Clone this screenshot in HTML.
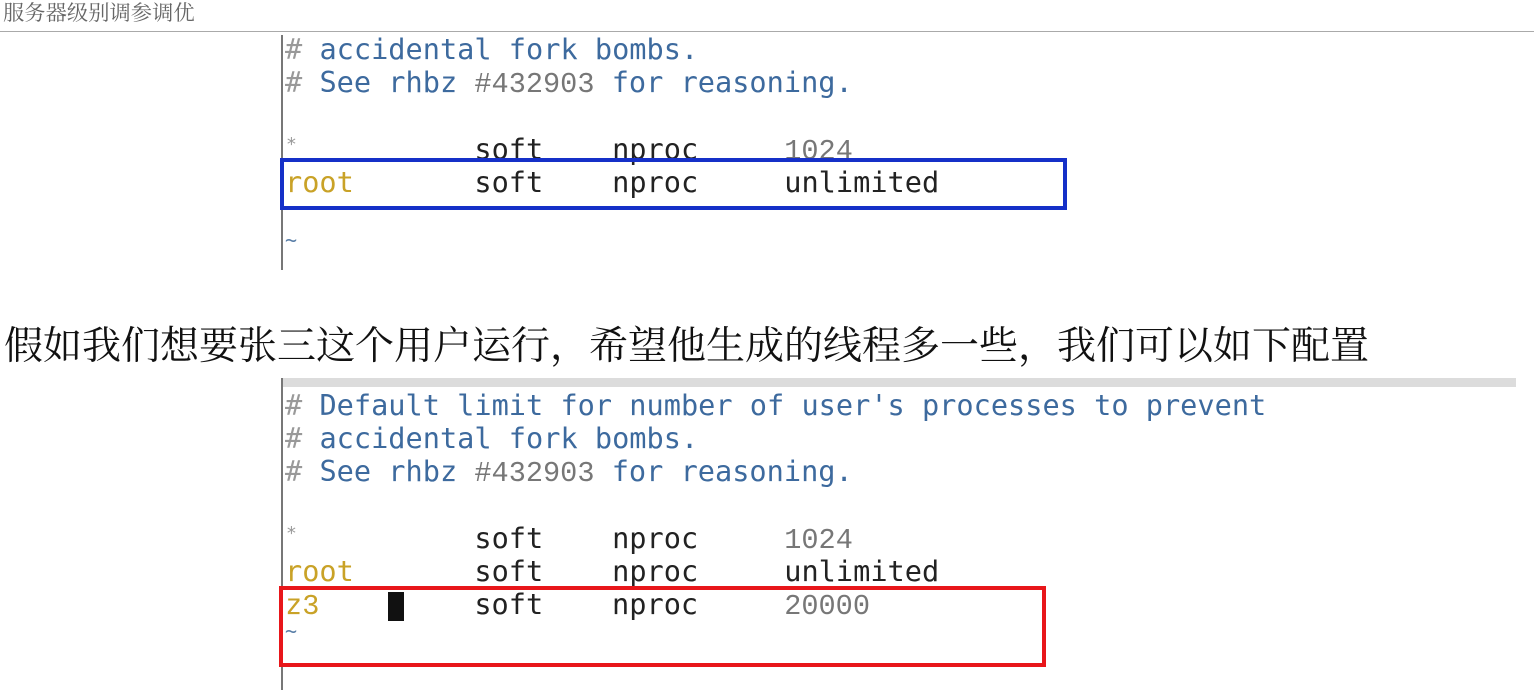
<!DOCTYPE html>
<html><head><meta charset="utf-8">
<style>
body{margin:0;width:1534px;height:690px;background:#fff;position:relative;overflow:hidden}
.hd{position:absolute;left:3px;top:0px;font:21.3px "Noto Serif CJK SC",serif;color:#666;line-height:24px}
.hl{position:absolute;left:0;top:31px;width:1534px;height:1px;background:#aaa}
.vl{position:absolute;width:2px;background:#777}
.ln{position:absolute;left:285px;font-family:"DejaVu Sans Mono",monospace;font-size:28.6px;line-height:33px;white-space:pre;color:#222}
.c{color:#3d6a9e}.h{color:#999}.n{color:#777;font-family:"Liberation Mono",monospace}.r{color:#c9a227}.t{color:#5a7fa8}
.st{position:absolute;left:286px;font:18px "DejaVu Sans Mono",monospace;color:#999}
.cn{position:absolute;left:4px;top:319px;font:39px "Noto Serif CJK SC",serif;line-height:48px;color:#111;white-space:nowrap}
.box{position:absolute;box-sizing:border-box}
</style></head><body>
<div class="hd">服务器级别调参调优</div>
<div class="hl"></div>
<div class="vl" style="left:281px;top:35px;height:235px"></div>
<div class="ln" style="top:33px"><span class="h">#</span> <span class="c">accidental fork bombs.</span></div>
<div class="ln" style="top:66px"><span class="h">#</span> <span class="c">See rhbz </span><span class="n">#432903</span><span class="c"> for reasoning.</span></div>
<div class="st" style="top:134px">*</div>
<div class="ln" style="top:133px">           soft    nproc     <span class="n">1024</span></div>
<div class="ln" style="top:166px"><span class="r">root</span>       soft    nproc     unlimited</div>
<div class="ln" style="top:224px;font-size:20px" ><span class="t">~</span></div>
<div class="box" style="left:280px;top:158px;width:787px;height:52px;border:4px solid #1530c8"></div>

<div class="cn">假如我们想要张三这个用户运行，希望他生成的线程多一些，我们可以如下配置</div>

<div style="position:absolute;left:282px;top:378px;width:1234px;height:9px;background:#dcdcdc"></div>
<div class="vl" style="left:281px;top:378px;height:312px"></div>
<div class="ln" style="top:389px"><span class="h">#</span> <span class="c">Default limit for number of user's processes to prevent</span></div>
<div class="ln" style="top:422px"><span class="h">#</span> <span class="c">accidental fork bombs.</span></div>
<div class="ln" style="top:455px"><span class="h">#</span> <span class="c">See rhbz </span><span class="n">#432903</span><span class="c"> for reasoning.</span></div>
<div class="st" style="top:523px">*</div>
<div class="ln" style="top:522px">           soft    nproc     <span class="n">1024</span></div>
<div class="ln" style="top:555px"><span class="r">root</span>       soft    nproc     unlimited</div>
<div class="ln" style="top:588px"><span class="r">z</span><span class="n" style="color:#c9a227">3</span>         soft    nproc     <span class="n">20000</span></div>
<div style="position:absolute;left:388px;top:592px;width:16px;height:29px;background:#111"></div>
<div class="ln" style="top:615px;font-size:20px"><span class="t">~</span></div>
<div class="box" style="left:279px;top:586px;width:767px;height:81px;border:4px solid #e8161a"></div>
</body></html>
